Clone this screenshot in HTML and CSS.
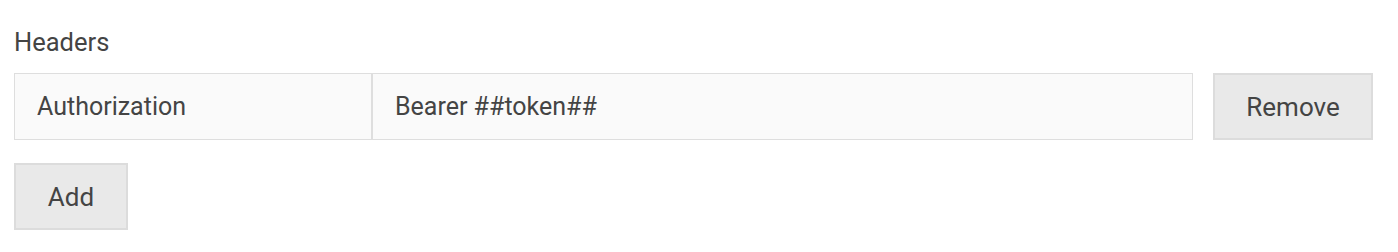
FILE: index.html
```html
<!DOCTYPE html>
<html>
<head>
<meta charset="utf-8">
<link rel="stylesheet" href="styles.css">
</head>
<body>
<div class="page">
  <div class="label">Headers</div>
  <div class="row">
    <div class="group">
      <input class="field key" type="text" value="Authorization">
      <input class="field value" type="text" value="Bearer ##token##">
    </div>
    <button class="btn remove">Remove</button>
  </div>
  <button class="btn add">Add</button>
</div>
</body>
</html>
```
FILE: styles.css
```css
html, body {
  margin: 0;
  padding: 0;
  background: #ffffff;
}
.page {
  padding: 26px 25px 0 14px;
  font-family: Roboto, "Liberation Sans", sans-serif;
  color: #444444;
}
.label {
  font-size: 25.5px;
  line-height: 32px;
  margin-bottom: 15px;
}
.row {
  display: flex;
  gap: 20px;
  align-items: stretch;
}
.group {
  display: flex;
  width: 1179px;
  border: 1px solid #dedede;
  box-sizing: border-box;
  height: 67px;
}
.field {
  font-family: Roboto, "Liberation Sans", sans-serif;
  font-size: 25px;
  color: #444444;
  background: #fafafa;
  border: none;
  outline: none;
  padding: 0 22px;
  margin: 0;
  height: 100%;
  box-sizing: border-box;
}
.key {
  width: 358px;
  border-right: 2px solid #dedede;
}
.value {
  flex: 1;
  min-width: 0;
}
.btn {
  font-family: Roboto, "Liberation Sans", sans-serif;
  font-size: 26px;
  color: #444444;
  background: #e9e9e9;
  border: 2px solid #dcdcdc;
  height: 67px;
  box-sizing: border-box;
  padding: 0;
  margin: 0;
}
.remove {
  width: 160px;
}
.add {
  display: block;
  width: 114px;
  margin-top: 23px;
}
```
